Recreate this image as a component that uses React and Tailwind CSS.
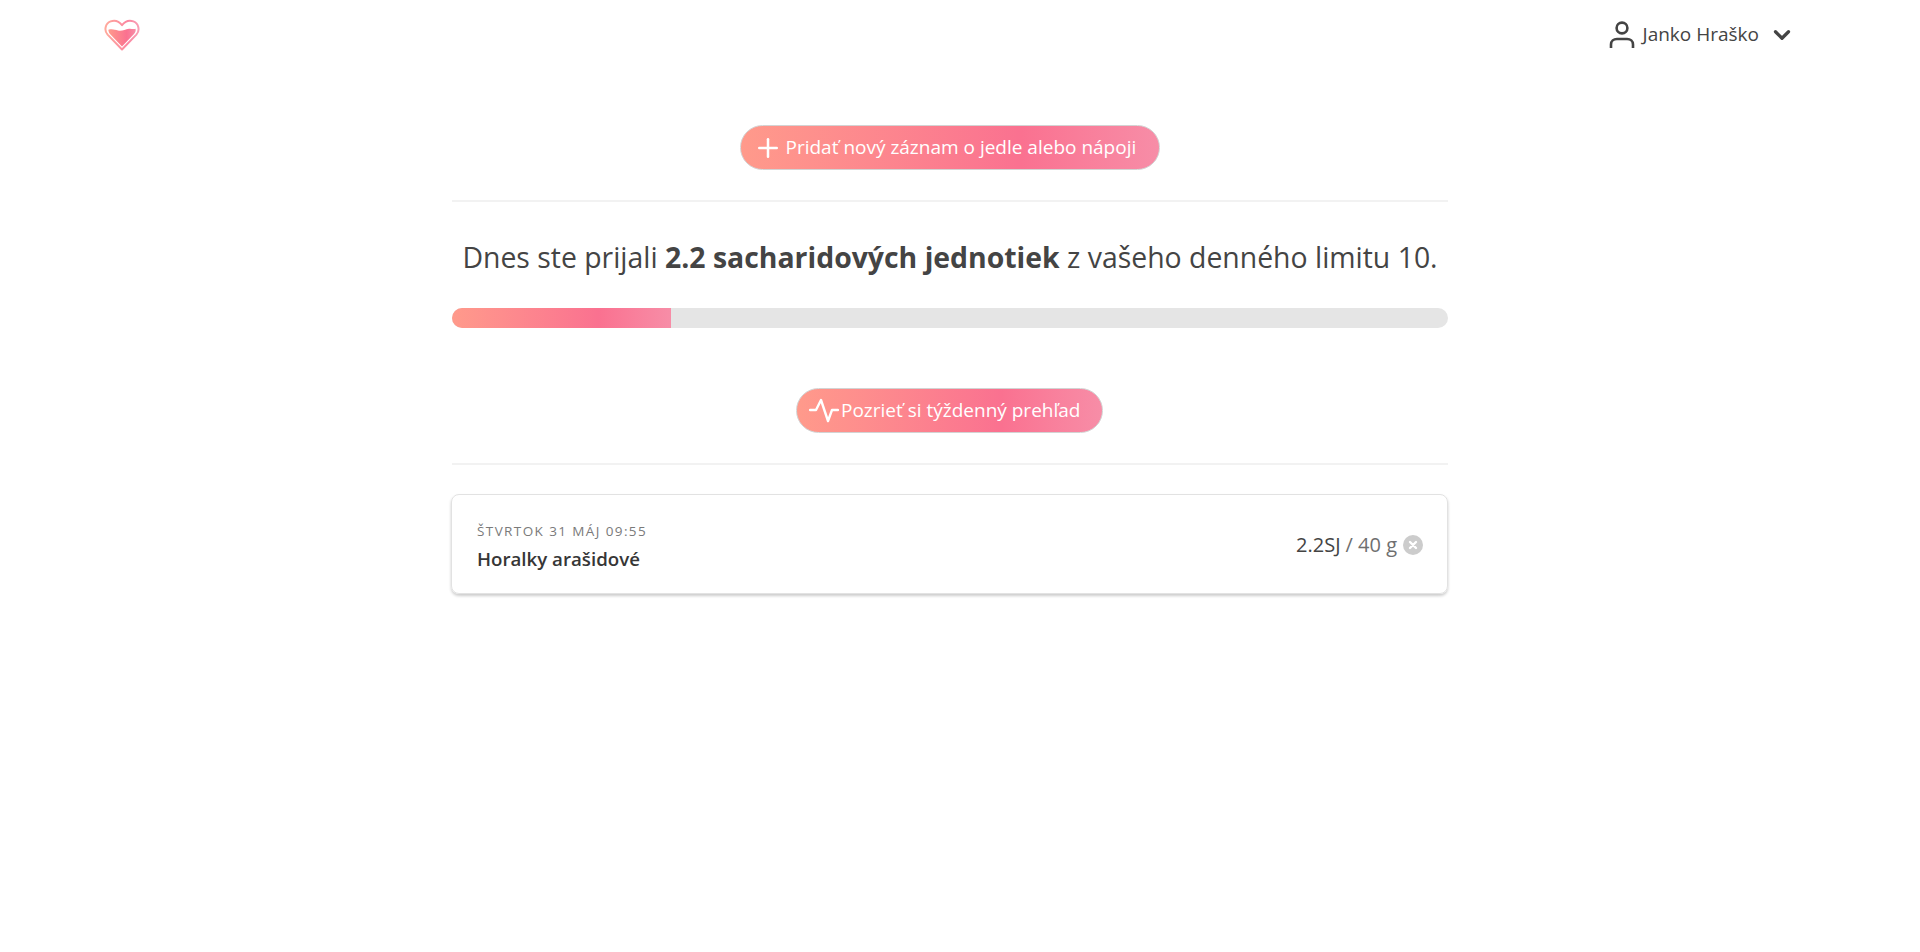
import { ChevronDown, Plus } from 'lucide-react';

const font = { fontFamily: '"Open Sans", "Noto Sans", sans-serif' };

function HeartLogo() {
  return (
    <svg width="36" height="32" viewBox="0 0 36 32" fill="none">
      <defs>
        <linearGradient id="heartFill" x1="0" y1="0" x2="1" y2="0">
          <stop offset="0" stopColor="#ff9a8b" />
          <stop offset="0.67" stopColor="#fa7190" />
          <stop offset="1" stopColor="#f78da7" />
        </linearGradient>
      </defs>
      <path
        d="M18 30.5 L3.6 15.6 C-0.2 11.4 1.2 4.4 6.6 2.4 C10.8 0.9 15.2 2.6 18 6.2 C20.8 2.6 25.2 0.9 29.4 2.4 C34.8 4.4 36.2 11.4 32.4 15.6 Z"
        stroke="url(#heartFill)"
        strokeOpacity="0.85"
        strokeWidth="2"
        strokeLinejoin="round"
      />
      <path
        d="M4.4 10.8 C8 9.6 11 10.8 14 11.6 C18 12.6 21 10.2 25 9.8 C27.6 9.6 29.6 10.4 31.6 9.8 C32 11.8 31.4 13.4 30 15 L18 27.4 L6 15 C4.8 13.6 4.4 12.2 4.4 10.8 Z"
        fill="url(#heartFill)"
      />
    </svg>
  );
}

function UserIcon() {
  return (
    <svg width="26" height="28" viewBox="0 0 26 28" fill="none" stroke="#444" strokeWidth="2.6" strokeLinecap="butt">
      <circle cx="13" cy="7" r="5.4" />
      <path d="M2 27 V23.5 C2 20 4.6 18 8 18 H18 C21.4 18 24 20 24 23.5 V27" />
    </svg>
  );
}

function PulseIcon() {
  return (
    <svg width="30" height="30" viewBox="0 0 30 30" fill="none" stroke="#fff" strokeWidth="2.4" strokeLinecap="round" strokeLinejoin="round">
      <path d="M1 14 H7 L12 4 L19 25 L23 14 H29" />
    </svg>
  );
}

function GradientButton({ icon, label, className }) {
  return (
    <button className={`flex items-center h-[45px] rounded-full border border-[#d3d3d3] bg-gradient-to-r from-[#ff9a8b] via-[#fa7190] via-[67%] to-[#f78da7] text-white text-[19px] ${className}`}>
      {icon}
      <span>{label}</span>
    </button>
  );
}

export default function App() {
  return (
    <div className="min-h-[952px] bg-white text-[#444]" style={font}>
      {/* Header */}
      <header className="flex items-center justify-between h-[70px] pl-[104px] pr-[125px]">
        <HeartLogo />
        <div className="flex items-center">
          <UserIcon />
          <span className="ml-[8px] -mt-[1px] text-[19px]">Janko Hraško</span>
          <ChevronDown size={26} strokeWidth={3} className="ml-[10px] text-[#444]" />
        </div>
      </header>

      <main className="w-[996px] ml-[452px] pt-[55px]">
        <div className="flex justify-center">
          <GradientButton
            className="w-[420px] -ml-[1px] pl-[12px]"
            icon={<Plus size={30} strokeWidth={2} className="mr-[3px]" />}
            label="Pridať nový záznam o jedle alebo nápoji"
          />
        </div>
        <hr className="mt-[30px] border-0 h-[2px] bg-[#f2f2f2]" />

        <p className="mt-[35px] text-center text-[28.4px] leading-[40px]">
          Dnes ste prijali <b>2.2 sacharidových jednotiek</b> z vašeho denného limitu 10.
        </p>

        <div className="mt-[31px] h-5 rounded-full bg-[#e5e5e5] overflow-hidden">
          <div className="h-full w-[219px] bg-gradient-to-r from-[#ff9a8b] via-[#fa7190] via-[67%] to-[#f78da7]" />
        </div>

        <div className="mt-[60px] flex justify-center">
          <GradientButton
            className="w-[307px] -ml-[1px] pl-[12px]"
            icon={<PulseIcon />}
            label={<span className="ml-[2px]">Pozrieť si týždenný prehľad</span>}
          />
        </div>
        <hr className="mt-[30px] border-0 h-[2px] bg-[#f2f2f2]" />

        <div className="mt-[29px] -ml-[1px] h-[100px] flex items-center justify-between rounded-lg border border-[#e2e2e2] shadow-[0_2px_3px_rgba(0,0,0,0.2)] pl-[25px] pr-[24px]">
          <div className="mt-[5px]">
            <div className="text-[13.5px] leading-[18px] tracking-[1.4px] text-[#7a7a7a]">ŠTVRTOK 31 MÁJ 09:55</div>
            <div className="mt-[6px] text-[18.7px] leading-[26px] font-semibold text-[#363636]">Horalky arašidové</div>
          </div>
          <div className="flex items-center text-[20px] mt-[2px]">
            <span className="text-[#444]">2.2SJ</span>
            <span className="ml-[5px] text-[#6f6f6f]">/ 40 g</span>
            <span className="ml-[6px] w-5 h-5 rounded-full bg-[#cccccc] flex items-center justify-center">
              <svg width="10" height="10" viewBox="0 0 10 10" stroke="#fff" strokeWidth="2.4" strokeLinecap="round">
                <path d="M2 2 L8 8 M8 2 L2 8" />
              </svg>
            </span>
          </div>
        </div>
      </main>
    </div>
  );
}
